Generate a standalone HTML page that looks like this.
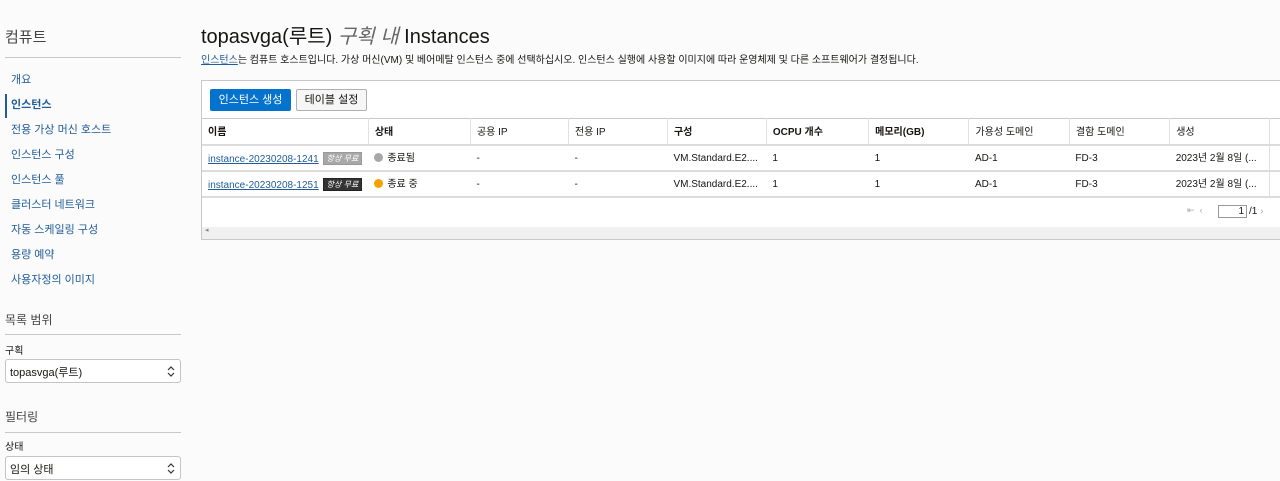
<!DOCTYPE html>
<html><head><meta charset="utf-8"><style>
*{margin:0;padding:0;box-sizing:border-box}
body{width:1280px;height:478px;overflow:hidden;background:#fbfbfb;font-family:"Liberation Sans","Noto Sans CJK KR",sans-serif;color:#161513;position:relative}
.a{position:absolute;white-space:nowrap;line-height:1.1}
.nav{font-size:11px;color:#1f5c99}
.hr{position:absolute;left:5px;width:176px;height:1px;background:#c8c8c8}
.sel{position:absolute;left:5px;width:176px;height:24px;border:1px solid #c4c4c4;border-radius:3px;background:#fff;font-size:11px;padding:2px 4px 0;line-height:22px}
.sel svg{position:absolute;right:5px;top:6px}
.tbl{position:absolute;left:201px;top:80px;width:1090px;height:160px;border:1px solid #c8c8c8;background:#fff}
table{position:absolute;left:0;top:37px;border-collapse:collapse;font-size:10px}
td,th{height:26px;border-bottom:2px solid #dcdcdc;padding:2px 6px 0;text-align:left;white-space:nowrap;vertical-align:middle;line-height:12px}
th{border-top:1px solid #c8c8c8;border-right:1px solid #e0e0e0;font-weight:bold;padding-top:3px}
th.n{font-weight:normal}
a{color:#1f5c99;text-decoration:underline}
.bdg{display:inline-block;font-size:8px;font-style:italic;color:#fff;padding:0 3px;margin-left:4px;border:1px solid #888;line-height:11px;vertical-align:1px}
.dot{display:inline-block;width:9px;height:9px;border-radius:50%;margin-right:4px;vertical-align:-1px}
</style></head><body>
<div class="a" style="left:5px;top:30px;font-size:15px;color:#444">컴퓨트</div>
<div class="hr" style="top:57px"></div>
<div class="a nav" style="left:11px;top:74px">개요</div>
<div class="a" style="left:5px;top:94px;width:2px;height:24px;background:#1f5c99"></div>
<div class="a nav" style="left:11px;top:99px;font-weight:bold">인스턴스</div>
<div class="a nav" style="left:11px;top:124px">전용 가상 머신 호스트</div>
<div class="a nav" style="left:11px;top:149px">인스턴스 구성</div>
<div class="a nav" style="left:11px;top:174px">인스턴스 풀</div>
<div class="a nav" style="left:11px;top:199px">클러스터 네트워크</div>
<div class="a nav" style="left:11px;top:224px">자동 스케일링 구성</div>
<div class="a nav" style="left:11px;top:249px">용량 예약</div>
<div class="a nav" style="left:11px;top:274px">사용자정의 이미지</div>
<div class="a" style="left:5px;top:314px;font-size:12px;color:#444">목록 범위</div>
<div class="hr" style="top:334px"></div>
<div class="a" style="left:5px;top:346px;font-size:10px">구획</div>
<div class="sel" style="top:359px">topasvga(루트)<svg width="8" height="11" viewBox="0 0 8 11"><path d="M1 4L4 1L7 4M1 7L4 10L7 7" fill="none" stroke="#333" stroke-width="1.2"/></svg></div>
<div class="a" style="left:5px;top:411px;font-size:12px;color:#444">필터링</div>
<div class="hr" style="top:432px"></div>
<div class="a" style="left:5px;top:442px;font-size:10px">상태</div>
<div class="sel" style="top:456px">임의 상태<svg width="8" height="11" viewBox="0 0 8 11"><path d="M1 4L4 1L7 4M1 7L4 10L7 7" fill="none" stroke="#333" stroke-width="1.2"/></svg></div>

<div class="a" style="left:201px;top:26px;font-size:20px">topasvga(루트) <i style="color:#666">구획 내</i> Instances</div>
<div class="a" style="left:201px;top:55px;font-size:10px"><a>인스턴스</a>는 컴퓨트 호스트입니다. 가상 머신(VM) 및 베어메탈 인스턴스 중에 선택하십시오. 인스턴스 실행에 사용할 이미지에 따라 운영체제 및 다른 소프트웨어가 결정됩니다.</div>
<div class="tbl">
<div class="a" style="left:8px;top:8px;width:81px;height:22px;background:#0572ce;border-radius:2px;color:#fff;font-size:11px;text-align:center;line-height:22px">인스턴스 생성</div>
<div class="a" style="left:94px;top:8px;width:71px;height:22px;background:#f6f6f6;border:1px solid #b0b0b0;border-radius:2px;font-size:11px;text-align:center;line-height:20px">테이블 설정</div>
<table>
<tr><th style="width:163px">이름</th><th style="width:103px">상태</th><th class="n" style="width:99px">공용 IP</th><th class="n" style="width:100px">전용 IP</th><th style="width:99px">구성</th><th style="width:103px">OCPU 개수</th><th style="width:101px">메모리(GB)</th><th class="n" style="width:101px">가용성 도메인</th><th class="n" style="width:101px">결함 도메인</th><th class="n" style="width:100px">생성</th><th style="width:20px"></th></tr>
<tr><td><a>instance-20230208-1241</a><span class="bdg" style="background:#a8a8a8;border-color:#999">항상 무료</span></td><td><span class="dot" style="background:#a8a8a8"></span>종료됨</td><td>-</td><td>-</td><td>VM.Standard.E2....</td><td>1</td><td>1</td><td>AD-1</td><td>FD-3</td><td>2023년 2월 8일 (...</td><td style="border-left:1px solid #e0e0e0"></td></tr>
<tr><td><a>instance-20230208-1251</a><span class="bdg" style="background:#333;border-color:#222">항상 무료</span></td><td><span class="dot" style="background:#f5a200"></span>종료 중</td><td>-</td><td>-</td><td>VM.Standard.E2....</td><td>1</td><td>1</td><td>AD-1</td><td>FD-3</td><td>2023년 2월 8일 (...</td><td style="border-left:1px solid #e0e0e0"></td></tr>
</table>
<div class="a" style="left:985px;top:125px;font-size:9px;color:#aaa">⇤ &nbsp;‹</div>
<div class="a" style="left:1016px;top:124px;width:29px;height:13px;border:1px solid #999;font-size:10px;text-align:right;padding-right:2px;line-height:11px">1</div>
<div class="a" style="left:1047px;top:125px;font-size:10px">/1 <span style="color:#aaa">›</span></div>
<div class="a" style="left:0;top:146px;width:1090px;height:12px;background:#f0f0f0;font-size:7px;color:#888;padding-left:3px">◂</div>
</div>
</body></html>
